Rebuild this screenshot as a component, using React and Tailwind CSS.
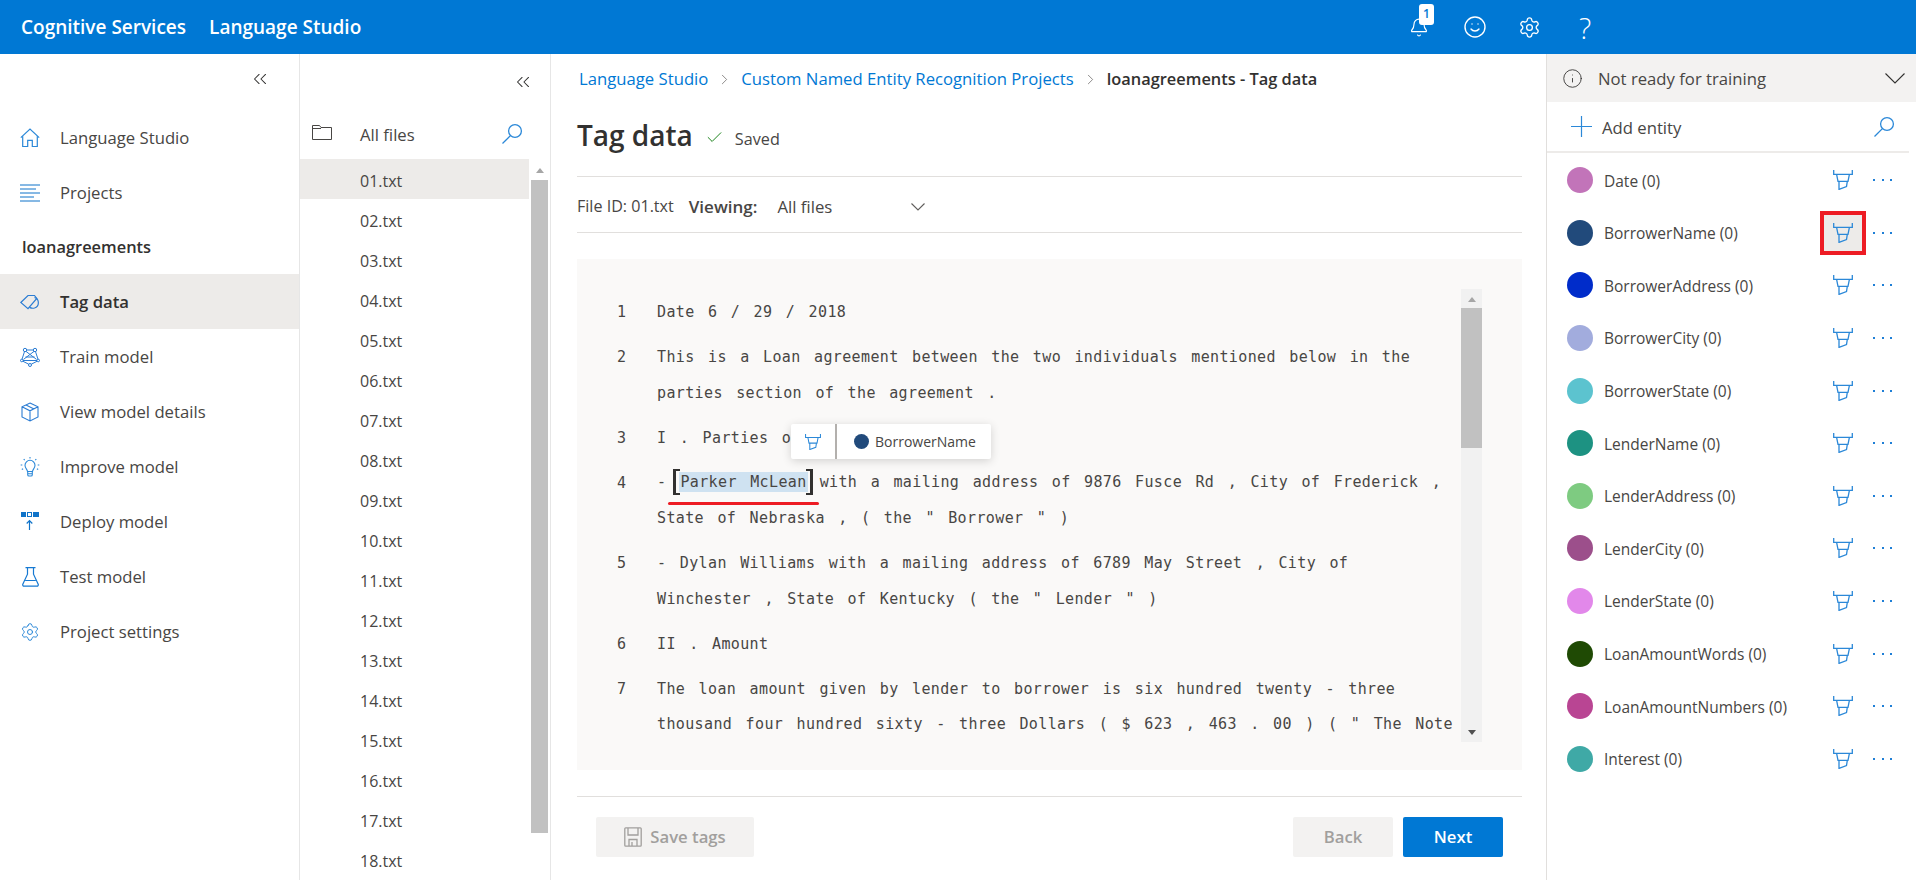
import { ChevronsLeft, Check, ChevronRight, Info, Settings, Smile, Bell } from 'lucide-react'

const files = Array.from({ length: 18 }, (_, i) => `${String(i + 1).padStart(2, '0')}.txt`)

const entities = [
  ['Date (0)', '#c274b9'],
  ['BorrowerName (0)', '#214a7b'],
  ['BorrowerAddress (0)', '#002cca'],
  ['BorrowerCity (0)', '#a2acdd'],
  ['BorrowerState (0)', '#5cc3cf'],
  ['LenderName (0)', '#1d9282'],
  ['LenderAddress (0)', '#7ecb81'],
  ['LenderCity (0)', '#9c4f8b'],
  ['LenderState (0)', '#e288ea'],
  ['LoanAmountWords (0)', '#1f4a04'],
  ['LoanAmountNumbers (0)', '#b94593'],
  ['Interest (0)', '#3fa9a6'],
]

const paragraphs = [
  ['Date 6 / 29 / 2018'],
  ['This is a Loan agreement between the two individuals mentioned below in the', 'parties section of the agreement .'],
  ['I . Parties of'],
  ['TAGGED', 'State of Nebraska , ( the " Borrower " )'],
  ['- Dylan Williams with a mailing address of 6789 May Street , City of', 'Winchester , State of Kentucky ( the " Lender " )'],
  ['II . Amount'],
  ['The loan amount given by lender to borrower is six hundred twenty - three', 'thousand four hundred sixty - three Dollars ( $ 623 , 463 . 00 ) ( " The Note'],
]

function SearchIcon({ className = '' }) {
  return (
    <svg width="22" height="22" viewBox="0 0 22 22" fill="none" stroke="currentColor" strokeWidth="1.3" className={className}>
      <circle cx="14" cy="8" r="6.4" />
      <path d="M9.4 12.6 1.5 20.5" />
    </svg>
  )
}

function Highlighter({ size = 20 }) {
  return (
    <svg width={size} height={size} viewBox="0 0 20 20" fill="none" stroke="#2b88d8" strokeWidth="1.3" className="shrink-0">
      <path d="M.7 0v4.3h18.6V0" />
      <path d="M3.6 4.3 5 11.4h10l1.4-7.1" />
      <path d="M6 11.4v8l7.5-2.800.8-5.200" />
    </svg>
  )
}

function ThinChevron({ width, height, className = '' }) {
  return (
    <svg width={width} height={height} viewBox={`0 0 ${width} ${height}`} fill="none" stroke="currentColor" strokeWidth="1.1" className={className}>
      <path d={`M.5 .5 ${width / 2} ${height - 1} ${width - 0.5} .5`} />
    </svg>
  )
}

function HomeIcon() {
  return (
    <svg width="20" height="20" viewBox="0 0 20 20" fill="none" stroke="#2b88d8" strokeWidth="1.2">
      <path d="M.8 9.600 10 1l9.200 8.600" />
      <path d="M2.700 8.200V18.500h5V12.400h4.600v6.100h5V8.200" />
    </svg>
  )
}

function ListIcon() {
  return (
    <svg width="20" height="18" viewBox="0 0 20 18" fill="none" stroke="#0f73c9" strokeWidth="1">
      <path d="M0 1h20M0 5h16M0 9h20M0 13h14M0 17h20" />
    </svg>
  )
}

function TagIcon() {
  return (
    <svg width="20" height="20" viewBox="0 0 20 20" fill="none" stroke="#2b7cd3" strokeWidth="1.2">
      <path d="M.8 10.500 8 3.500h6.500l2.300 3L8 16.700z" />
      <path d="M14.500 5.500a5.500 5.500 0 0 1 0 10.500c-1.800.5-3.500.2-5-.6" />
    </svg>
  )
}

function TrainIcon() {
  return (
    <svg width="20" height="20" viewBox="0 0 20 20" fill="none" stroke="#2b7cd3" strokeWidth="1">
      <circle cx="5" cy="3" r="1.700" />
      <circle cx="15" cy="3" r="1.700" />
      <circle cx="1.800" cy="13.500" r="1.300" />
      <circle cx="18.200" cy="13.500" r="1.300" />
      <circle cx="10" cy="18" r="1.500" />
      <path d="M6.700 3h6.600M4.500 4.600 2 12.300M15.500 4.600 18 12.300M3 14.300l5.700 2.900M17 14.300l-5.700 2.900M3 13.500h14M6 4.400l10.500 8M14 4.400 3.500 12.400M5.500 10h9" />
    </svg>
  )
}

function CubeIcon() {
  return (
    <svg width="18" height="20" viewBox="0 0 18 20" fill="none" stroke="#2b7cd3" strokeWidth="1.1">
      <path d="M9 1 17 4.800V15L9 19 1 15V4.800zM1 4.800 9 8.800l8-4M9 8.800V19M5 2.900l8 4" />
    </svg>
  )
}

function BulbIcon() {
  return (
    <svg width="20" height="20" viewBox="0 0 20 20" fill="none" stroke="#2b88d8" strokeWidth="1.1">
      <path d="M7.500 14.500c0-2-2.500-3-2.500-6.200a5 5 0 0 1 10 0c0 3.200-2.500 4.200-2.500 6.200zM7.700 14.500v3.200c0 .8.600 1.300 1.300 1.300h2c.7 0 1.300-.5 1.300-1.300v-3.200M7.700 16.800h4.600" />
      <path d="M10 0v1.500M3.700 2l1 1.200M16.300 2l-1 1.200M.7 8h1.600M17.700 8h1.600M1.800 12.500l1.300-.8M18.200 12.500l-1.300-.8" />
    </svg>
  )
}

function DeployIcon() {
  return (
    <svg width="18" height="20" viewBox="0 0 18 20" fill="none">
      <rect x="0" y="0" width="5" height="5" fill="#0f73c9" />
      <rect x="6.500" y=".5" width="4" height="4" stroke="#0f73c9" />
      <rect x="12" y="0" width="6" height="5" fill="#0f73c9" />
      <path d="M8.500 18V9M5.700 11.500 8.500 8.700l2.800 2.800" stroke="#0f73c9" strokeWidth="1.200" />
    </svg>
  )
}

function FlaskIcon() {
  return (
    <svg width="17" height="20" viewBox="0 0 17 20" fill="none" stroke="#1679d2" strokeWidth="1.200">
      <path d="M3.500.7h10M5.500.7v6.500L.8 17.300c-.3.900.2 1.900 1.300 1.900h12.800c1.100 0 1.600-1 1.300-1.900L11.500 7.200V.7M3.300 13.500h10.400" />
    </svg>
  )
}

function SaveIcon() {
  return (
    <svg width="18" height="20" viewBox="0 0 18 20" fill="none" stroke="#a19f9d" strokeWidth="1.300">
      <path d="M1.700.8h14.600c.5 0 .9.400.9.900v16.600c0 .5-.4.900-.9.900H1.700c-.5 0-.9-.4-.9-.9V1.700c0-.5.4-.9.900-.9z" />
      <path d="M4 1v7h10V1M5 19v-6.500h8V19M8 15v4" />
    </svg>
  )
}

function FolderIcon() {
  return (
    <svg width="20" height="15" viewBox="0 0 20 15" fill="none" stroke="#484644" strokeWidth="1">
      <path d="M.5.500h7l1.500 2h10.500v12H.5zM.5 3.500H9" />
    </svg>
  )
}

function NavItem({ icon, label, active }) {
  return (
    <div className={`flex h-[55px] items-center ${active ? 'bg-[#edebe9] font-semibold text-[#323130]' : 'text-[#484644]'}`}>
      <span className="flex w-[60px] shrink-0 justify-center">{icon}</span>
      <span>{label}</span>
    </div>
  )
}

function Dots() {
  return (
    <span className="flex w-[19px] shrink-0 justify-between">
      <i className="h-[2px] w-[2px] bg-[#1f7fd6]" />
      <i className="h-[2px] w-[2px] bg-[#1f7fd6]" />
      <i className="h-[2px] w-[2px] bg-[#1f7fd6]" />
    </span>
  )
}

function CodeLine({ text }) {
  if (text === 'TAGGED') {
    return (
      <div className="flex h-[35.500px] -translate-y-[1px] items-center whitespace-pre">
        <span>-</span>
        <span className="ml-[7px] h-[26px] w-[7px] shrink-0 border-y-2 border-l-[3px] border-[#323130]" />
        <span className="-ml-[1px] bg-[#cfe2f1] px-[1px] leading-[20px]">Parker McLean</span>
        <span className="-ml-[2px] h-[26px] w-[7px] shrink-0 border-y-2 border-r-[3px] border-[#323130]" />
        <span className="ml-[7px]">with a mailing address of 9876 Fusce Rd , City of Frederick ,</span>
      </div>
    )
  }
  return <div className="h-[35.500px] whitespace-pre leading-[35.500px]">{text}</div>
}

export default function App() {
  return (
    <div className="flex h-[880px] w-[1916px] flex-col overflow-hidden bg-white font-['Open_Sans',sans-serif] text-[16.700px] text-[#323130]">
      {/* top bar */}
      <header className="flex h-[54px] shrink-0 items-center bg-[#0078d4] text-white">
        <span className="ml-[21px] text-[19px] font-semibold">Cognitive Services</span>
        <span className="ml-[23px] text-[19px] font-semibold">Language Studio</span>
        <div className="relative ml-auto mr-[322px] flex items-center">
          <span className="relative flex w-[20px] justify-center">
            <Bell size={21} strokeWidth={1.400} />
            <span className="absolute left-[10px] top-[-13px] flex h-[21px] w-[15px] items-center justify-center rounded-[3px] bg-white text-[12px] font-semibold text-[#0078d4]">1</span>
          </span>
          <Smile size={24} strokeWidth={1.400} className="ml-[34px]" />
          <Settings size={23} strokeWidth={1.400} className="ml-[31px]" />
          <span className="ml-[35px] w-[18px] text-center text-[29px] font-light leading-none">?</span>
        </div>
      </header>

      <div className="flex min-h-0 flex-1">
        {/* left nav */}
        <nav className="w-[300px] shrink-0 border-r border-[#e6e6e6]">
          <div className="flex h-[56px] items-start justify-end pr-[28px] pt-[14px]">
            <ChevronsLeft size={22} strokeWidth={1.100} className="text-[#323130]" />
          </div>
          <NavItem icon={<HomeIcon />} label="Language Studio" />
          <NavItem icon={<ListIcon />} label="Projects" />
          <div className="flex h-[54px] items-center pl-[22px] text-[16.400px] font-semibold">loanagreements</div>
          <NavItem active icon={<TagIcon />} label="Tag data" />
          <NavItem icon={<TrainIcon />} label="Train model" />
          <NavItem icon={<CubeIcon />} label="View model details" />
          <NavItem icon={<BulbIcon />} label="Improve model" />
          <NavItem icon={<DeployIcon />} label="Deploy model" />
          <NavItem icon={<FlaskIcon />} label="Test model" />
          <NavItem icon={<Settings size={20} strokeWidth={1.200} className="text-[#2b88d8]" />} label="Project settings" />
        </nav>

        {/* file list */}
        <aside className="flex w-[251px] shrink-0 flex-col border-r border-[#e6e6e6]">
          <div className="flex h-[54px] justify-end pr-[16px] pt-[17px]">
            <ChevronsLeft size={22} strokeWidth={1.100} className="text-[#323130]" />
          </div>
          <div className="flex h-[51px] items-center">
            <span className="flex w-[60px] justify-center pb-[2px] pr-[16px]"><FolderIcon /></span>
            <span className="pt-[2px] text-[#484644]">All files</span>
            <SearchIcon className="ml-auto mr-[27px] text-[#2b88d8]" />
          </div>
          <div className="flex min-h-0 flex-1">
            <div className="w-[229px] shrink-0 text-[16px]">
              {files.map((f, i) => (
                <div key={f} className={`flex h-[40px] items-center pl-[60px] pt-[3px] text-[#484644] ${i === 0 ? 'bg-[#edebe9]' : ''}`}>{f}</div>
              ))}
            </div>
            <div className="ml-[2px] flex w-[17px] flex-col items-center">
              <span className="mt-[9px] h-0 w-0 border-x-[4px] border-b-[5px] border-x-transparent border-b-[#a6a6a6]" />
              <span className="mt-[7px] h-[653px] w-full bg-[#c1c1c1]" />
            </div>
          </div>
        </aside>

        {/* main */}
        <main className="flex w-[995px] shrink-0 flex-col pl-[26px] pr-[24px]">
          <div className="flex h-[48px] items-center pl-[2px] pt-[2px] text-[#0078d4]">
            <span>Language Studio</span>
            <ChevronRight size={17} strokeWidth={1} className="mx-[8px] text-[#605e5c]" />
            <span>Custom Named Entity Recognition Projects</span>
            <ChevronRight size={17} strokeWidth={1} className="mx-[8px] text-[#605e5c]" />
            <span className="text-[16.400px] font-semibold text-[#323130]">loanagreements - Tag data</span>
          </div>
          <div className="flex h-[75px] items-center border-b border-[#e1dfdd] pb-[8px]">
            <span className="text-[28px] font-semibold">Tag data</span>
            <Check size={19} strokeWidth={1.200} className="ml-[12px] mt-[4px] text-[#107c10]" />
            <span className="ml-[11px] mt-[8px] text-[16.200px] text-[#484644]">Saved</span>
          </div>
          <div className="flex h-[56px] items-center border-b border-[#e1dfdd] pt-[4px] text-[16.100px] text-[#484644]">
            <span>File ID: 01.txt</span>
            <span className="ml-[15px] text-[17px] font-semibold">Viewing:</span>
            <span className="ml-[20px] text-[16.800px]">All files</span>
            <ThinChevron width={14} height={8} className="ml-[79px] text-[#605e5c]" />
          </div>

          <div className="relative mt-[26px] flex h-[511px] shrink-0 bg-[#faf9f8] pt-[30px] font-['DejaVu_Sans_Mono',monospace] text-[15px] tracking-[0.370px] text-[#484644] [word-spacing:4px]">
            <div className="h-[453px] w-[884px] shrink-0 overflow-hidden pt-[6px]">
              {paragraphs.map((lines, i) => (
                <div key={i} className="mb-[9.500px] flex">
                  <span className="w-[80px] shrink-0 pl-[40px] leading-[35.500px]">{i + 1}</span>
                  <div>
                    {lines.map((l) => <CodeLine key={l} text={l} />)}
                  </div>
                </div>
              ))}
            </div>
            <div className="flex h-[453px] w-[21px] flex-col items-center bg-[#f1f1f1]">
              <span className="mt-[8px] h-0 w-0 border-x-[4px] border-b-[5px] border-x-transparent border-b-[#a6a6a6]" />
              <span className="mt-[6px] h-[140px] w-full bg-[#c1c1c1]" />
              <span className="mb-[7px] mt-auto h-0 w-0 border-x-[4px] border-t-[5px] border-x-transparent border-t-[#505050]" />
            </div>

            {/* tag popup */}
            <div className="absolute left-[214px] top-[165px] flex h-[35px] w-[200px] items-center rounded-[2px] bg-white font-['Open_Sans',sans-serif] text-[14px] tracking-normal text-[#484644] shadow-[0_2px_10px_rgba(0,0,0,0.16)] [word-spacing:0]">
              <span className="flex w-[44px] justify-center"><Highlighter size={16} /></span>
              <span className="h-full w-[2px] bg-[#b3b0ad]" />
              <span className="ml-[17px] h-[15px] w-[15px] rounded-full bg-[#214a7b]" />
              <span className="ml-[6px]">BorrowerName</span>
            </div>
            <span className="absolute left-[91px] top-[243px] h-[3px] w-[151px] rounded-full bg-[#ed1c24]" />
          </div>

          <div className="mt-[26px] flex h-[61px] shrink-0 items-end border-t border-[#e1dfdd] px-[19px] font-semibold">
            <button className="flex h-[40px] w-[158px] items-center justify-center gap-[8px] rounded-[2px] bg-[#f3f2f1] text-[#a19f9d]">
              <SaveIcon /> Save tags
            </button>
            <button className="ml-auto h-[40px] w-[100px] rounded-[2px] bg-[#f3f2f1] text-[#a19f9d]">Back</button>
            <button className="ml-[10px] h-[40px] w-[100px] rounded-[2px] bg-[#0078d4] text-white">Next</button>
          </div>
        </main>

        {/* entity panel */}
        <aside className="min-w-0 flex-1 border-l border-[#e1dfdd]">
          <div className="flex h-[48px] items-center bg-[#f3f2f1] pl-[15px] text-[#484644]">
            <Info size={21} strokeWidth={1} className="text-[#323130]" />
            <span className="ml-[15px] pt-[2px]">Not ready for training</span>
            <ThinChevron width={20} height={11} className="ml-auto mr-[11px] text-[#323130]" />
          </div>
          <div className="mr-[7px] flex h-[51px] items-center border-b-2 border-[#edebe9] pl-[24px] text-[#484644]">
            <svg width="21" height="21" viewBox="0 0 21 21" fill="none" stroke="#2b88d8" strokeWidth="1.200">
              <path d="M10.500 0v21M0 10.500h21" />
            </svg>
            <span className="ml-[10px] pt-[2px]">Add entity</span>
            <SearchIcon className="ml-auto mr-[14px] text-[#2b88d8]" />
          </div>
          {entities.map(([name, color], i) => (
            <div key={name} className="relative flex h-[52.600px] translate-y-[1px] items-center pl-[20px] text-[15.500px] text-[#484644]">
              <span className="h-[26px] w-[26px] shrink-0 rounded-full" style={{ backgroundColor: color }} />
              <span className="ml-[11px] pt-[2px]">{name}</span>
              <span className="ml-auto flex items-center pr-[24px]">
                <span className={`flex h-[44px] w-[46px] items-center justify-center ${i === 1 ? 'border-[4px] border-[#ed1c24] bg-[#edebe9]' : ''}`}>
                  <Highlighter />
                </span>
                <span className="ml-[7px]"><Dots /></span>
              </span>
            </div>
          ))}
        </aside>
      </div>
    </div>
  )
}
